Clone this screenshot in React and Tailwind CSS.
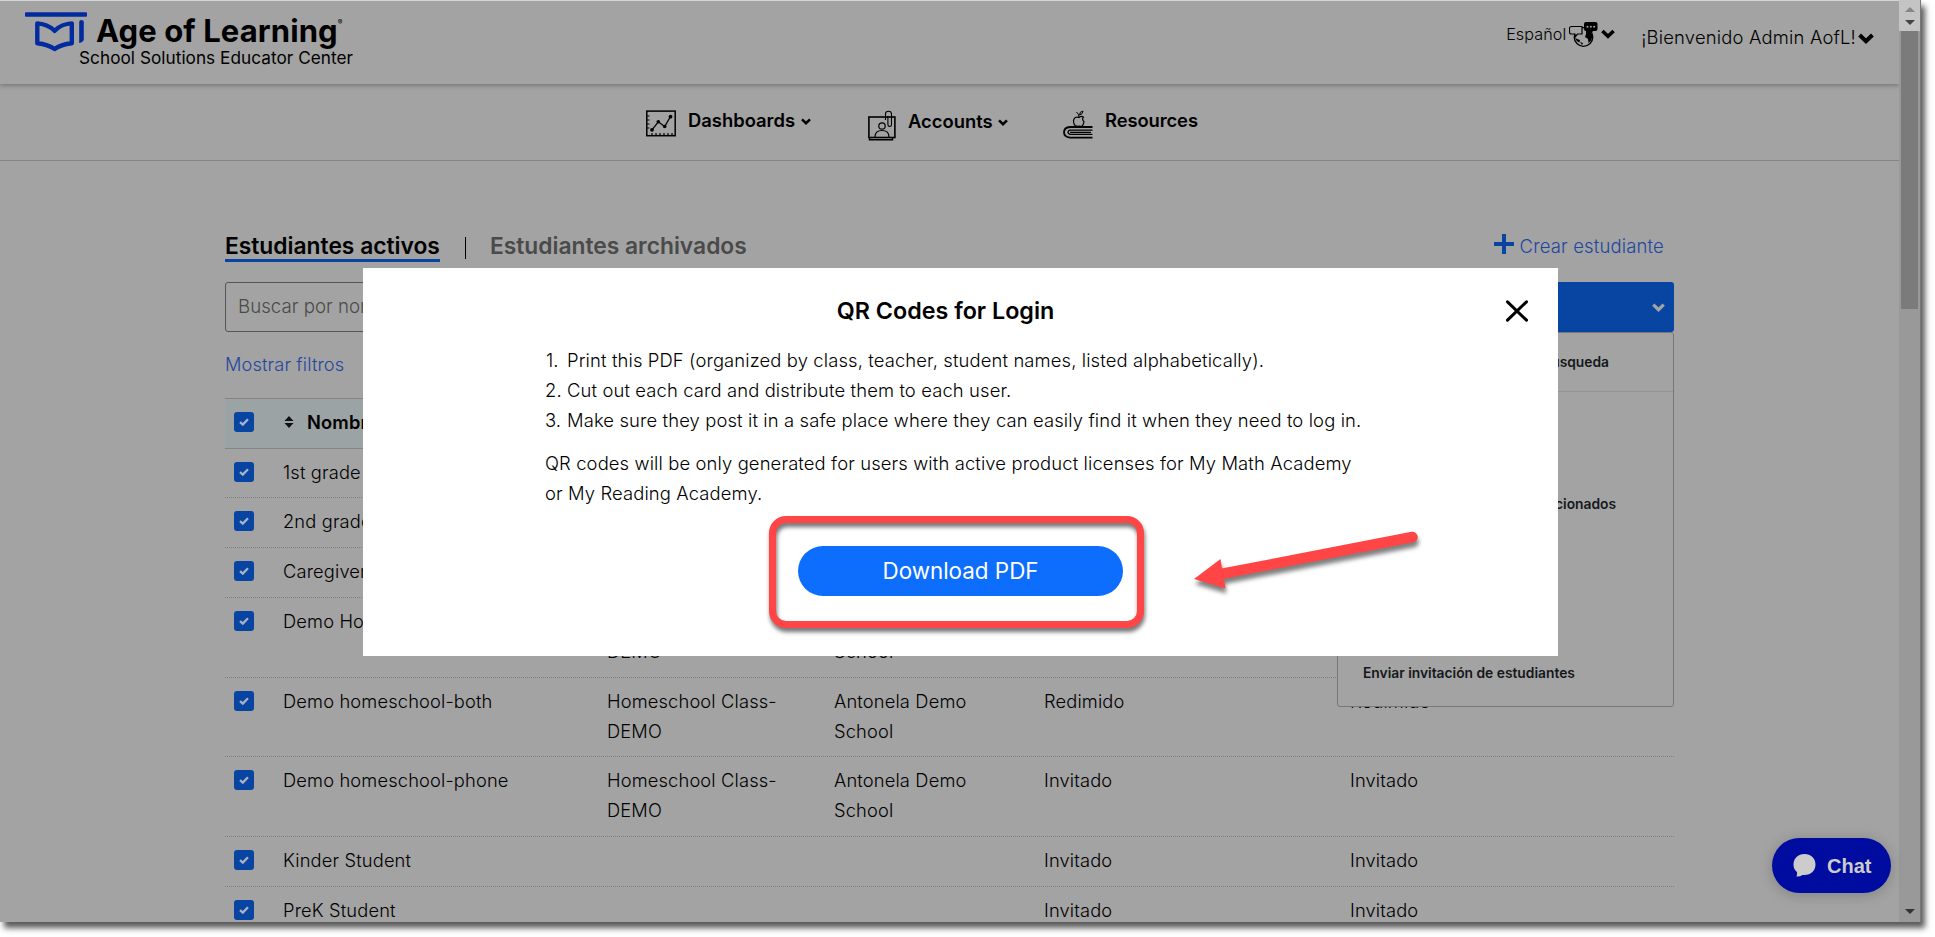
import React from 'react';

const students = [
  { name: '1st grade', height: 'h-[49px]' },
  { name: '2nd grade', height: 'h-[50px]' },
  { name: 'Caregiver', height: 'h-[50px]' },
  {
    name: 'Demo Homeschool',
    className: 'Homeschool Class-DEMO',
    school: 'Antonela Demo School',
    height: 'h-[80px]',
  },
  {
    name: 'Demo homeschool-both',
    className: 'Homeschool Class-DEMO',
    school: 'Antonela Demo School',
    math: 'Redimido',
    reading: 'Redimido',
    height: 'h-[79px]',
  },
  {
    name: 'Demo homeschool-phone',
    className: 'Homeschool Class-DEMO',
    school: 'Antonela Demo School',
    math: 'Invitado',
    reading: 'Invitado',
    height: 'h-[80px]',
  },
  { name: 'Kinder Student', math: 'Invitado', reading: 'Invitado', height: 'h-[50px]' },
  { name: 'PreK Student', math: 'Invitado', reading: 'Invitado', height: 'h-[50px]' },
];

const Chevron = ({ className }) => (
  <svg viewBox="0 0 16 11" className={className} fill="none" stroke="currentColor" strokeWidth="4">
    <path d="M1.6 2 8 8.2 14.4 2" />
  </svg>
);

const Checkbox = () => (
  <span className="flex h-5 w-5 items-center justify-center rounded-[3px] bg-[#0845a3]">
    <svg viewBox="0 0 10 8" className="h-2 w-2.5" fill="none" stroke="#a9b3c2" strokeWidth="2.3">
      <path d="M1 4.2 3.8 6.6 9 1.2" />
    </svg>
  </span>
);

const Logo = () => (
  <div className="flex pt-[11px] pl-[25px]">
    <svg viewBox="0 0 62 40" className="h-10 w-[62px] shrink-0">
      <rect x="0" y="0.3" width="62" height="4.4" rx="1" fill="#032ba0" />
      <path
        d="M12.3 11.4C18 11.6 25.5 14.4 29.6 18.8 33.7 14.4 41 11.6 46.8 11.4V31.2C41 31.8 33.5 34 29.6 37 25.5 34 18 31.8 12.3 31.2Z"
        fill="none"
        stroke="#032ba0"
        strokeWidth="4.4"
        strokeLinejoin="round"
      />
      <path d="M54.2 10q0-2 2.300-2t2.300 2v17q0 3.200-4.600 4Z" fill="#032ba0" />
    </svg>
    <div className="-ml-2 pt-[3px]">
      <div className="flex pl-[17px] text-[31px] leading-8 font-bold tracking-[0.1px]">
        Age of Learning
        <span className="pt-1 text-[7px] leading-none font-normal">®</span>
      </div>
      <div className="mt-0.5 text-[17.2px] leading-[18px] font-normal tracking-[0.04px]">School Solutions Educator Center</div>
    </div>
  </div>
);

const LanguageIcon = () => (
  <svg viewBox="0 0 29 26" className="h-[26px] w-[29px]">
    <circle cx="14.5" cy="15" r="9.3" fill="none" stroke="#000" strokeWidth="1.3" />
    <path d="M17 9h4l2.500 4-1 5-3 3-.5-4-3-2 1-3z" />
    <path d="M6 15.500 8 17l3 1-.5 2.500q-3.500-1-4.500-5zM11 20l3 1-1 2z" />
    <path d="M2.500 4.500h10.500v7.500H8.500L6 15v-3H2.500q-2 0-2-1.800V6.300q0-1.800 2-1.800z" fill="#a3a3a3" stroke="#000" strokeWidth="1.2" />
    <path d="M17 0h9.500q2 0 2 2v5q0 2-2 2H24l-2 3-2.500-3H17q-2 0-2-2V2q0-2 2-2z" />
    <circle cx="18.5" cy="4.7" r="1" fill="#a3a3a3" />
    <circle cx="21.8" cy="4.7" r="1" fill="#a3a3a3" />
    <circle cx="25.1" cy="4.7" r="1" fill="#a3a3a3" />
  </svg>
);

const DashboardIcon = () => (
  <svg viewBox="0 0 30 27" className="h-[27px] w-[30px]" fill="none" stroke="#000">
    <rect x="0.8" y="1.1" width="28.4" height="24.6" strokeWidth="1.5" />
    <path d="M1 6h2.500M1 10h2.500M1 14h2.500M1 18h2.500M6 25.500V23M10 25.500V23M14 25.500V23M18 25.500V23M22 25.500V23M26 25.500V23" strokeWidth="1.2" />
    <path d="M6 19.800 12.300 11.800 18.700 16.500 24.500 6.500" strokeWidth="1.3" />
    <g fill="#000" stroke="none">
      <circle cx="6" cy="19.8" r="1.9" />
      <circle cx="12.3" cy="11.8" r="1.8" />
      <circle cx="18.7" cy="16.5" r="1.8" />
      <circle cx="24.5" cy="6.7" r="1.9" />
    </g>
  </svg>
);

const AccountsIcon = () => (
  <svg viewBox="0 0 28 31" className="h-[31px] w-7" fill="none" stroke="#000">
    <rect x="0.9" y="7" width="26" height="20.5" strokeWidth="1.6" />
    <path d="M1.500 27v2.700H24.500V27" strokeWidth="1.5" />
    <circle cx="14" cy="16" r="3.2" strokeWidth="1.2" />
    <path d="M7 27q0-6.500 7-6.500t7 6.500" strokeWidth="1.2" />
    <path d="M17.500 10V4q0-2.800 3-2.800t3 2.800v10.500q0 2-1.800 2t-1.800-2V6" strokeWidth="1.1" />
  </svg>
);

const ResourcesIcon = () => (
  <svg viewBox="0 0 30 29" className="h-[29px] w-[30px]" fill="none" stroke="#000">
    <path d="M29.500 17H7Q1 17.500 1 22.300T7 27.600H29.500" strokeWidth="1.8" />
    <path d="M29.500 20.200H7.500Q5 20.500 5 22.300T7.500 24.400H29.500M7 22.300h21" strokeWidth="1.2" />
    <path d="M16 7.500q2.500-2 4.500-.3-2 2 .5 4.500-1 5-3.200 4.700-1.800-.8-3.600 0Q10.500 16 10.500 10.500q1-4.500 5.500-3z" strokeWidth="1.2" />
    <path d="M16 7q0-3-2.500-5M16.500 5q0-3.500 3.500-4-.3 3.500-3.500 4z" strokeWidth="1" />
  </svg>
);

const Header = () => (
  <header className="flex h-[83px] justify-between shadow-[0_2px_4px_rgba(0,0,0,0.25)]">
    <Logo />
    <div className="flex pr-[25px]">
      <div className="flex pt-[21px]">
        <span className="text-[16.2px] leading-6 tracking-[0.05px]">Español</span>
        <span className="ml-[3px]">
          <LanguageIcon />
        </span>
        <Chevron className="mt-[7px] ml-[3px] h-[10px] w-[14px]" />
      </div>
      <div className="ml-[26px] flex pt-6">
        <span className="text-[18.4px] leading-6 tracking-[0.2px]">¡Bienvenido Admin AofL!</span>
        <Chevron className="mt-2 ml-[2px] h-[11px] w-4" />
      </div>
    </div>
  </header>
);

const Nav = () => (
  <nav className="flex h-[77px] border-b border-[#858585] pt-[26px] pl-[646px] text-[18.4px] leading-5 font-semibold">
    <div className="flex w-[222px]">
      <DashboardIcon />
      <span className="ml-3">Dashboards</span>
      <Chevron className="mt-2 ml-1.5 h-[7px] w-[10px]" />
    </div>
    <div className="flex w-[195px]">
      <AccountsIcon />
      <span className="ml-3 pt-px">Accounts</span>
      <Chevron className="mt-[9px] ml-[5px] h-[7px] w-[10px]" />
    </div>
    <div className="flex">
      <ResourcesIcon />
      <span className="ml-3 tracking-[-0.1px]">Resources</span>
    </div>
  </nav>
);

const ActionsMenu = () => (
  <div className="relative">
    <div className="flex h-[50px] w-[337px] items-center justify-end rounded-[3px] bg-[#0845a3] pr-[9px] text-[#a3a3a3]">
      <Chevron className="h-[9px] w-[13px]" />
    </div>
    <div className="absolute top-[50px] left-0 h-[375px] w-[337px] rounded-[3px] border border-[#777] bg-[#a3a3a3] text-[13.8px] leading-5 font-semibold text-[#15181b]">
      <div className="flex h-[59px] items-center justify-end border-b border-[#939393] pr-[64px]">búsqueda</div>
      <div className="flex h-[223px] items-center justify-end pr-[57px]">seleccionados</div>
      <div className="mt-[48px] pl-[25px]">Enviar invitación de estudiantes</div>
    </div>
  </div>
);

const StudentTable = () => (
  <div className="mt-[22px] text-[18.3px] leading-[30px] tracking-[0.15px]">
    <div className="flex h-[51px] border-y border-[#858585] bg-[#9ba3a4] pt-2 pl-[9px]">
      <span className="pt-[5px]">
        <Checkbox />
      </span>
      <svg viewBox="0 0 10 12" className="mt-[9px] ml-[30px] h-3 w-2.5">
        <path d="M5 0 9.500 5H.5zM5 12 .5 7h9z" fill="#111" />
      </svg>
      <span className="ml-[13px] font-semibold">Nombre</span>
    </div>
    {students.map((s) => (
      <div key={s.name} className={'flex border-b border-dotted border-[#7d7d7d] pt-2 ' + s.height}>
        <div className="w-[58px] shrink-0 pt-[5px] pl-[9px]">
          <Checkbox />
        </div>
        <div className="w-[324px] shrink-0">{s.name}</div>
        <div className="w-[227px] shrink-0 pr-10">{s.className}</div>
        <div className="w-[210px] shrink-0 pr-10">{s.school}</div>
        <div className="w-[306px] shrink-0">{s.math}</div>
        <div>{s.reading}</div>
      </div>
    ))}
  </div>
);

const QrModal = () => (
  <div className="absolute top-[268px] left-[363px] h-[388px] w-[1195px] bg-white pt-7">
    <h2 className="pr-[30px] text-center text-[23.3px] leading-[30px] font-semibold">QR Codes for Login</h2>
    <svg viewBox="0 0 24 22" className="absolute top-[32px] left-[1142px] h-[22px] w-6" stroke="#000" strokeWidth="3" strokeLinecap="round">
      <path d="M2.500 1.800 21.500 20.200M21.500 1.800 2.500 20.200" />
    </svg>
    <div className="pt-[19px] pl-[182px] text-[18.4px] leading-[30px] tracking-[0.13px]">
      <ol>
        <li className="flex"><span className="w-[22px] pl-px">1.</span>Print this PDF (organized by class, teacher, student names, listed alphabetically).</li>
        <li className="flex"><span className="w-[22px]">2.</span>Cut out each card and distribute them to each user.</li>
        <li className="flex"><span className="w-[22px]">3.</span>Make sure they post it in a safe place where they can easily find it when they need to log in.</li>
      </ol>
      <p className="mt-[13px] w-[824px]">
        QR codes will be only generated for users with active product licenses for My Math Academy
        <br />
        or My Reading Academy.
      </p>
    </div>
    <button className="mt-[38px] ml-[435px] block h-[50px] w-[325px] rounded-full bg-[#0d6efd] text-[22.4px] leading-[50px] font-normal text-white">
      Download PDF
    </button>
    {/* callouts drawn over the dialog */}
    <div className="absolute top-[248px] left-[406px] h-[112px] w-[375px] rounded-[17px] border-[7px] border-[#ff4545] drop-shadow-[1px_4px_2px_rgba(0,0,0,0.55)]" />
    <svg viewBox="0 0 230 70" className="absolute top-[255px] left-[826px] h-[70px] w-[230px] overflow-visible drop-shadow-[1px_5px_2px_rgba(0,0,0,0.5)]">
      <path d="M32 51 223.500 14" stroke="#ff4545" strokeWidth="10.5" strokeLinecap="round" />
      <path d="M5 56 31.500 36 36.500 65.500Z" fill="#ff4545" />
    </svg>
  </div>
);

const Scrollbar = () => (
  <div className="flex h-full w-[22px] flex-col items-center border-r border-[#777] bg-[#999]">
    <div className="flex h-[31px] w-full flex-col items-center justify-between bg-[#c4c4c4] pt-[7px] pb-1.5">
      <svg viewBox="0 0 10 5" className="h-[5px] w-2.5"><path d="M5 0 10 5H0z" fill="#858585" /></svg>
      <svg viewBox="0 0 10 5" className="h-[5px] w-2.5"><path d="M0 0h10L5 5z" fill="#444" /></svg>
    </div>
    <div className="h-[278px] w-[17px] bg-[#7b7b7b]" />
    <svg viewBox="0 0 10 5" className="mt-auto mb-2 h-[5px] w-2.5"><path d="M0 0h10L5 5z" fill="#333" /></svg>
  </div>
);

const App = () => {
  return (
    <div className="h-[937px] w-[1935px] overflow-hidden bg-white font-['Inter',sans-serif] font-[350] text-black">
      <div className="relative flex h-[922px] w-[1921px] bg-[#a3a3a3] shadow-[4px_6px_6px_rgba(0,0,0,0.65)]">
        <div className="h-full w-[1899px] overflow-hidden border-t border-[#d5d5d5]">
          <Header />
          <Nav />
          <main className="w-[1674px] pl-[225px]">
            <div className="flex items-start pt-[72px] text-[22.8px] leading-[26px] font-semibold">
              <span className="border-b-[3px] border-[#0845a3]">Estudiantes activos</span>
              <span className="mt-1 ml-[25px] h-[22px] w-px bg-black" />
              <span className="ml-6 text-[#4a4a4a]">Estudiantes archivados</span>
              <div className="ml-auto flex pr-[10px] text-[18.5px] font-[350] tracking-[0.15px] text-[#1f479f]">
                <svg viewBox="0 0 20 20" className="mt-px mr-1.5 h-5 w-5"><path d="M10 0v20M0 10h20" stroke="#0845a3" strokeWidth="4" /></svg>
                <span>Crear estudiante</span>
              </div>
            </div>
            <div className="mt-5 flex justify-between">
              <div className="h-[50px] w-[400px] rounded-[3px] border border-[#555] pl-3 text-[18.7px] leading-[47px] text-[#4a4a4a]">
                Buscar por nombre
              </div>
              <ActionsMenu />
            </div>
            <div className="mt-5 text-[18.2px] leading-6 tracking-[0.15px] text-[#1f479f]">Mostrar filtros</div>
            <StudentTable />
          </main>
        </div>
        <Scrollbar />
        <QrModal />
        <div className="absolute top-[838px] left-[1772px] flex h-[55px] w-[119px] items-center rounded-full bg-[#000ba0] pl-[21px] font-['Liberation_Sans',sans-serif] text-[20px] font-bold text-[#ccc] shadow-[0_2px_14px_rgba(0,0,0,0.2)]">
          <svg viewBox="0 0 23 23" className="mr-[11px] h-[23px] w-[23px]">
            <path d="M11.500 0C18 0 22.500 4.500 22.500 10.500S18 21 11.500 21H9.500Q7 22.700 3.500 22.500 4.500 20.500 4 18 .5 15.500.5 10.500C.5 4.500 5 0 11.500 0z" fill="#ccc" />
          </svg>
          Chat
        </div>
      </div>
    </div>
  );
};

export default App;
